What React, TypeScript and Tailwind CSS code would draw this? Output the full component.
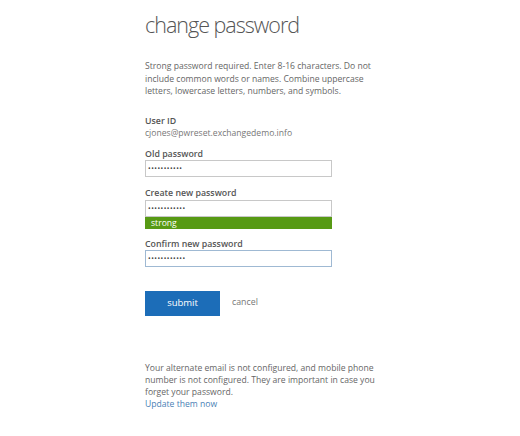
import React from "react";

const font = { fontFamily: '"Open Sans", "Noto Sans", sans-serif' };

function PwInput({ dots, focus }: { dots: number; focus?: boolean }) {
  return (
    <div
      className={`h-[17px] w-[187px] border ${focus ? "border-[#9fb9d3]" : "border-[#c8c8c8]"} bg-white flex items-center pl-[2px]`}
    >
      <span className="text-[7px] leading-none tracking-[0.5px] text-[#444]">{"•".repeat(dots)}</span>
    </div>
  );
}

export default function App() {
  return (
    <div className="w-[520px] h-[436px] bg-white" style={font}>
      <div className="pl-[145px] pt-[11px] flex flex-col">
        <h1 className="text-[21.5px] leading-[28px] font-light text-[#555] tracking-[-1px]">
          change password
        </h1>
        <p className="mt-[21px] w-[240px] text-[8.6px] leading-[12.5px] text-[#666]">
          Strong password required. Enter 8-16 characters. Do not include common words or names. Combine uppercase letters, lowercase letters, numbers, and symbols.
        </p>
        <div className="mt-[17px] text-[8.8px] leading-[12px] font-semibold text-[#555]">User ID</div>
        <div className="text-[8.6px] leading-[12px] text-[#777]">cjones@pwreset.exchangedemo.info</div>
        <div className="mt-[9px] text-[8.8px] leading-[12px] font-semibold text-[#555]">Old password</div>
        <div>
          <PwInput dots={11} />
        </div>
        <div className="mt-[10px] text-[8.8px] leading-[12px] font-semibold text-[#555]">Create new password</div>
        <div className="mt-[1px]">
          <PwInput dots={12} />
        </div>
        <div className="w-[187px] h-[12px] bg-[#579a14] text-white text-[8.6px] leading-[12px] pl-[6px]">strong</div>
        <div className="mt-[9px] text-[8.8px] leading-[12px] font-semibold text-[#555]">Confirm new password</div>
        <div>
          <PwInput dots={12} focus />
        </div>
        <div className="mt-[24px] flex items-center gap-[12px]">
          <div className="w-[75px] h-[25px] bg-[#1c6db8] text-white text-[9.5px] flex items-center justify-center">submit</div>
          <span className="text-[8.8px] text-[#777]">cancel</span>
        </div>
        <p className="mt-[46px] w-[240px] text-[8.6px] leading-[12.3px] text-[#666]">
          Your alternate email is not configured, and mobile phone number is not configured. They are important in case you forget your password.
        </p>
        <div className="text-[8.6px] leading-[12.3px] text-[#4a7fb5]">Update them now</div>
      </div>
    </div>
  );
}
